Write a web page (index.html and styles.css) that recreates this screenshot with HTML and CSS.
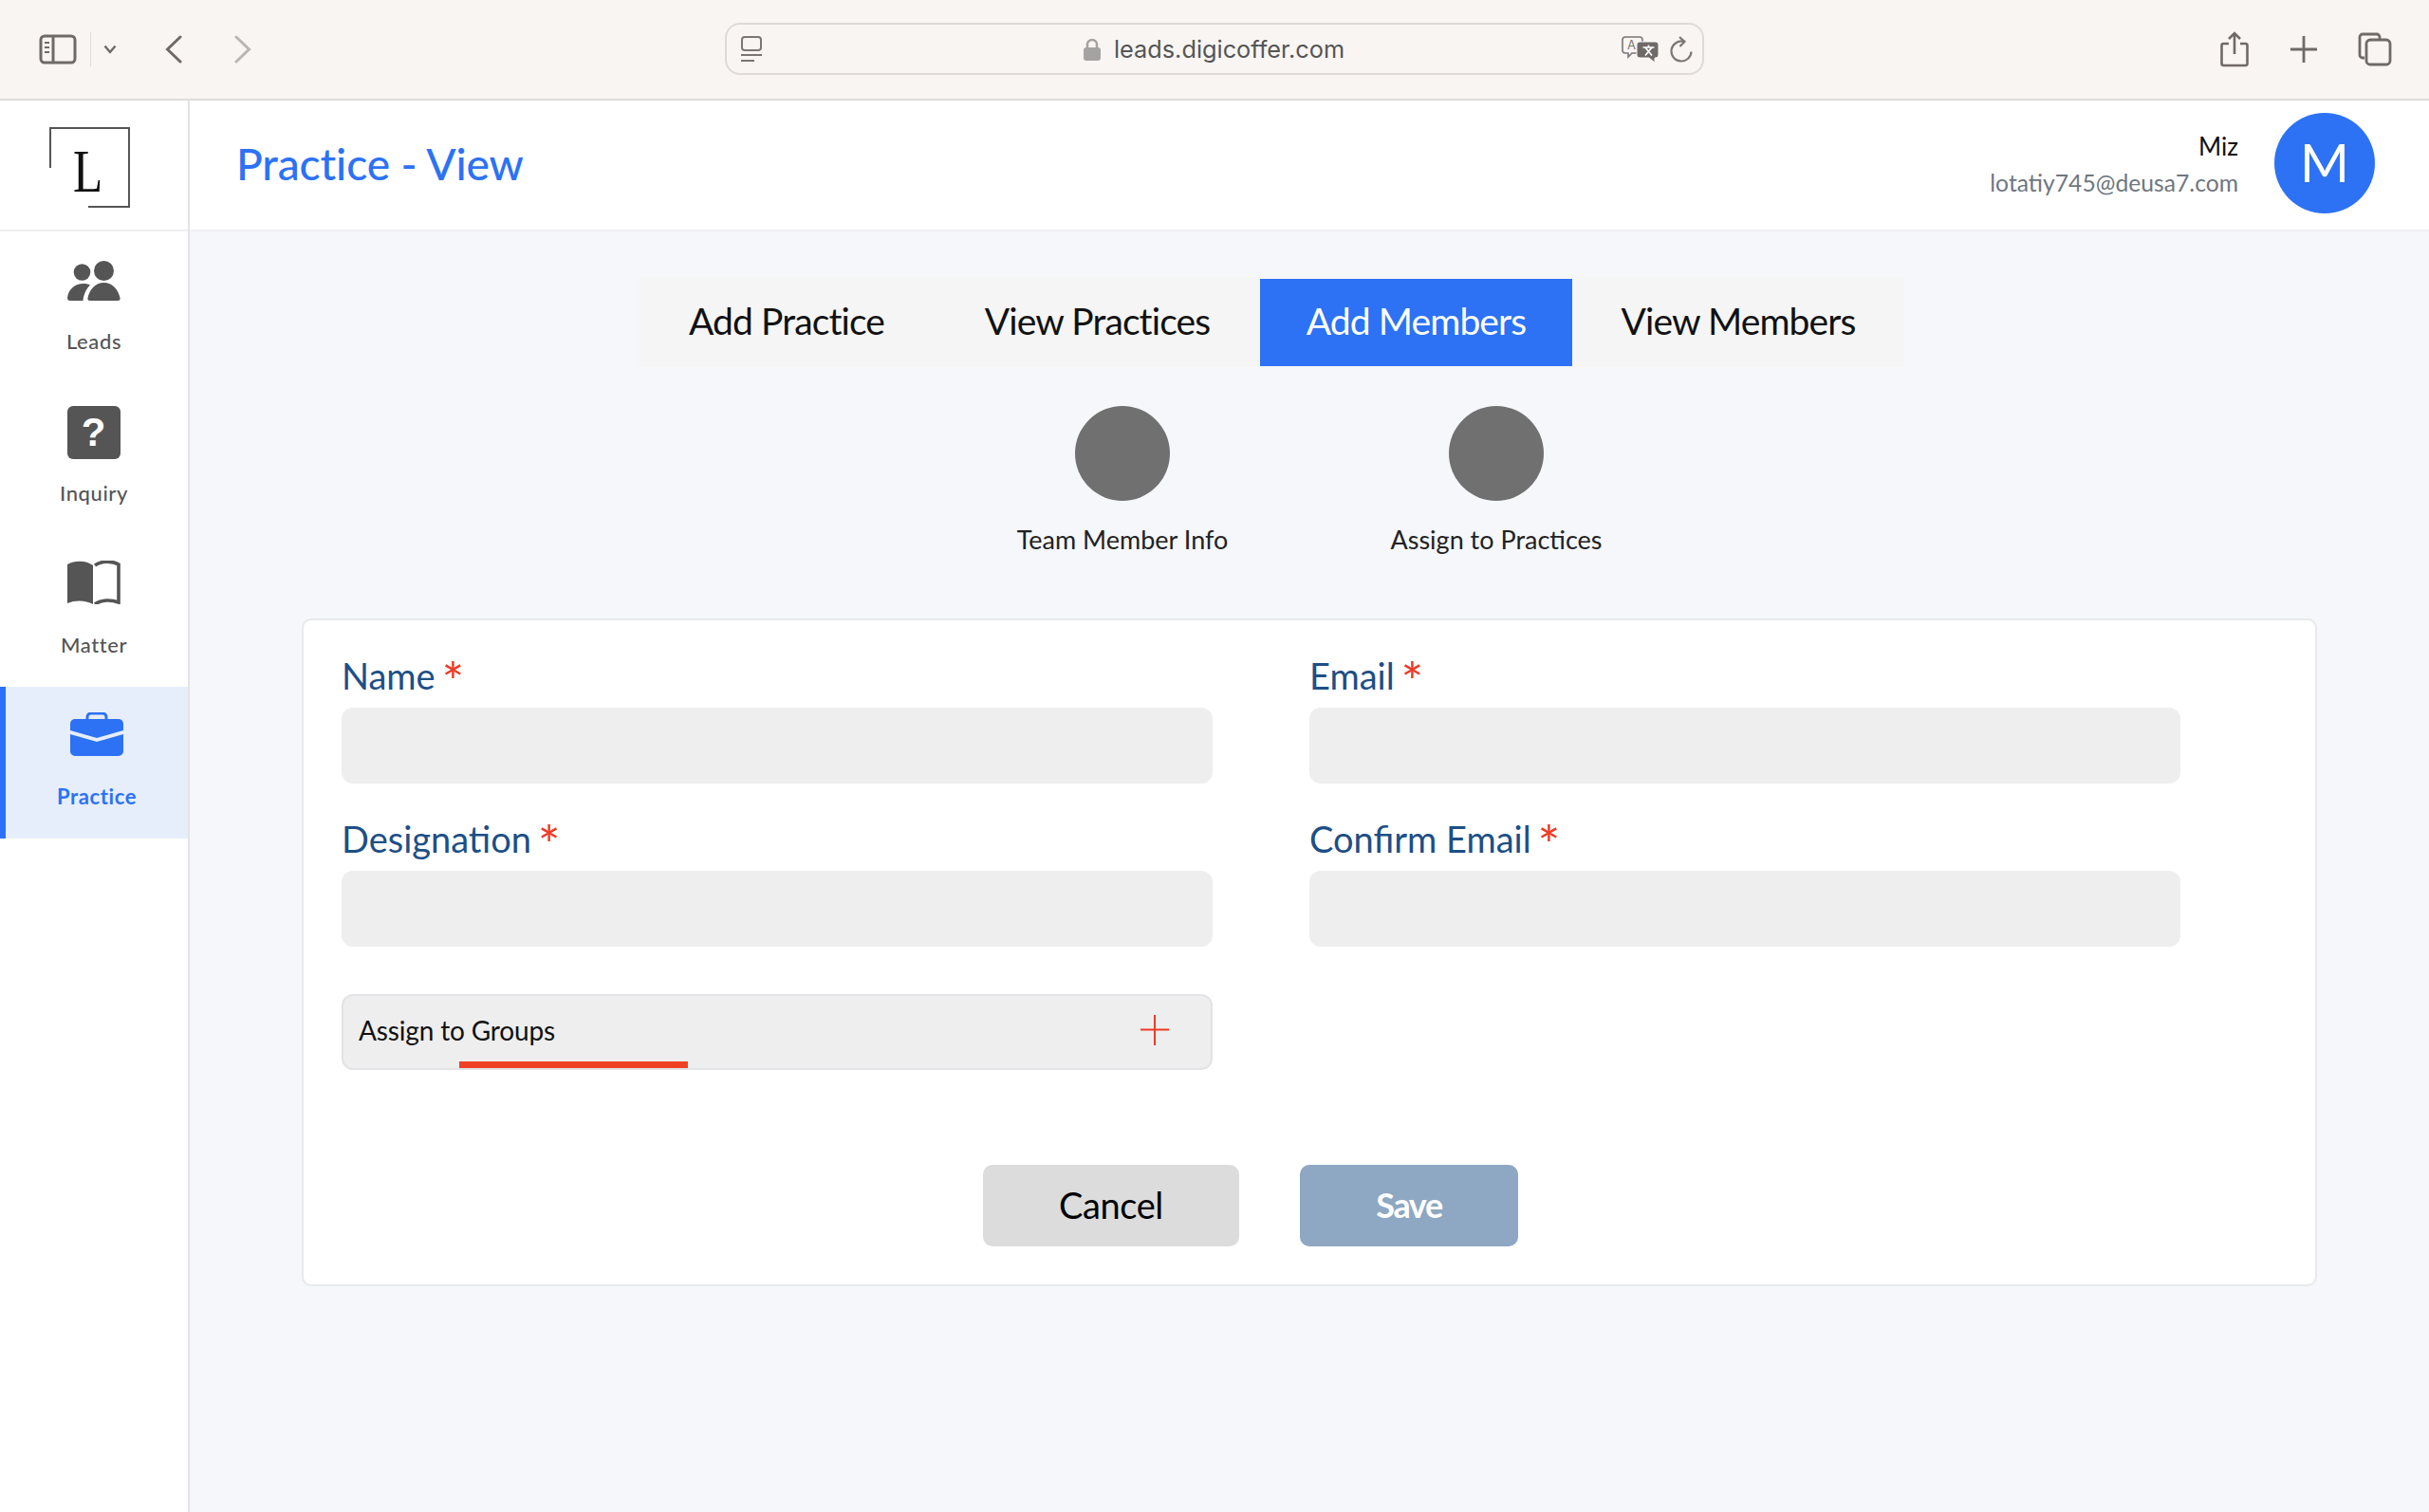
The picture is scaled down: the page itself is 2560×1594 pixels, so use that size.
FILE: index.html
```html
<!DOCTYPE html>
<html lang="en">
<head>
<meta charset="utf-8">
<title>Practice - View</title>
<link rel="stylesheet" href="styles.css">
</head>
<body>
<header class="browser">
  <div class="browser-left">
    <svg class="ic-sidebar" width="40" height="32" viewBox="0 0 40 32" fill="none" stroke="#6f6a68" stroke-width="3"><rect x="2" y="2" width="36" height="28" rx="4"/><path d="M15 2v28"/><path d="M6 9h5M6 14h5M6 19h5" stroke-width="2"/></svg>
    <span class="sep"></span>
    <svg class="ic-caret" width="14" height="10" viewBox="0 0 14 10" fill="none" stroke="#6f6a68" stroke-width="2.4"><path d="M1.500 1.500 7 8l5.500-6.500"/></svg>
    <svg class="ic-back" width="18" height="30" viewBox="0 0 18 30" fill="none" stroke="#6f6a68" stroke-width="3" stroke-linecap="round"><path d="M16 2 2.500 15 16 28"/></svg>
    <svg class="ic-forward" width="18" height="30" viewBox="0 0 18 30" fill="none" stroke="#b9b6b4" stroke-width="3" stroke-linecap="round"><path d="M2 2l13.500 13L2 28"/></svg>
  </div>
  <div class="address">
    <svg class="ic-page" width="24" height="28" viewBox="0 0 24 28" fill="none" stroke="#7b7675" stroke-width="2"><rect x="2" y="1" width="20" height="14" rx="3"/><path d="M1 20h22M1 26h14"/></svg>
    <div class="url"><svg width="18" height="24" viewBox="0 0 18 24"><path d="M4 11V7a5 5 0 0 1 10 0v4" fill="none" stroke="#a5a3a2" stroke-width="2.500"/><rect x="0" y="10" width="18" height="14" rx="3" fill="#a5a3a2"/></svg><span>leads.digicoffer.com</span></div>
    <svg class="ic-translate" width="40" height="28" viewBox="0 0 40 28"><path d="M4 1h15a3 3 0 0 1 3 3v11a3 3 0 0 1-3 3H11l-4 4v-4H4a3 3 0 0 1-3-3V4a3 3 0 0 1 3-3z" fill="#f9f5f3" stroke="#7b7675" stroke-width="1.600"/><text x="6" y="14" class="tr-a">A</text><path d="M19 6h17a3 3 0 0 1 3 3v11a3 3 0 0 1-3 3h-1v5l-6-5H19a3 3 0 0 1-3-3V9a3 3 0 0 1 3-3z" fill="#6f6a68" stroke="#f9f5f3"/><path d="M22.500 12h12M28.500 9.500V12M25 20.500l7-8.500M32 20.500l-7-8.500" stroke="#fff" stroke-width="1.700" fill="none"/></svg>
    <svg class="ic-reload" width="24" height="28" viewBox="0 0 24 28" fill="none" stroke="#7b7675" stroke-width="2.200"><path d="M14.500 5.800A10.500 10.500 0 1 0 22.500 16.500"/><path d="M10 1l5.500 4.800L10.500 11"/></svg>
  </div>
  <div class="browser-right">
    <svg width="30" height="38" viewBox="0 0 30 38" fill="none" stroke="#6f6a68" stroke-width="2.600"><path d="M9 13H3.500a2 2 0 0 0-2 2v19a2 2 0 0 0 2 2h23a2 2 0 0 0 2-2V15a2 2 0 0 0-2-2H21"/><path d="M15 24V2M9 8l6-6 6 6"/></svg>
    <svg width="28" height="28" viewBox="0 0 28 28" fill="none" stroke="#6f6a68" stroke-width="2.800"><path d="M14 0v28M0 14h28"/></svg>
    <svg width="36" height="36" viewBox="0 0 36 36" fill="none" stroke="#6f6a68" stroke-width="2.800"><path d="M7 27H5a3 3 0 0 1-3-3V5a3 3 0 0 1 3-3h15a3 3 0 0 1 3 3v2"/><rect x="9" y="8" width="25" height="26" rx="4"/></svg>
  </div>
</header>

<div class="app">
  <aside class="sidebar">
    <div class="logo">
      <div class="logo-mark"><span class="logo-letter">L</span></div>
    </div>
    <nav class="nav">
      <a class="nav-item">
        <svg width="56" height="42" viewBox="0 0 56 42" fill="#555"><circle cx="15.500" cy="12" r="8.800"/><circle cx="38.500" cy="10.500" r="10.500"/><path d="M0 39c1-9 8-15 17-15 3 0 5 .5 7 1.500-4 4-7 10-7.500 16.500H3c-2 0-3-1-3-3z"/><path d="M24 42c-2 0-3-1-2.500-3 2-9 8-16 17-16s15 7 17 16c.5 2-.5 3-2.500 3z"/></svg>
        <span>Leads</span>
      </a>
      <a class="nav-item">
        <svg width="56" height="56" viewBox="0 0 56 56"><rect width="56" height="56" rx="6" fill="#555"/><text x="28" y="42" class="q-mark">?</text></svg>
        <span>Inquiry</span>
      </a>
      <a class="nav-item">
        <svg width="56" height="46" viewBox="0 0 56 46"><path d="M0 4C9-1 20 0 27 5v41c-7-4-18-5-27-1z" fill="#555"/><path d="M29 5c7-5 18-5 25-1v40c-8-3-18-3-25 2" fill="none" stroke="#555" stroke-width="3.600"/></svg>
        <span>Matter</span>
      </a>
      <a class="nav-item active">
        <svg width="56" height="46" viewBox="0 0 56 46" fill="#2d72f5"><path d="M18 7V5a4 4 0 0 1 4-4h12a4 4 0 0 1 4 4v2" fill="none" stroke="#2d72f5" stroke-width="3"/><path d="M5 7h46a5 5 0 0 1 5 5v7L28 27 0 19v-7a5 5 0 0 1 5-5z"/><path d="M0 23l28 8 28-8v18a5 5 0 0 1-5 5H5a5 5 0 0 1-5-5z"/></svg>
        <span>Practice</span>
      </a>
    </nav>
  </aside>

  <div class="main">
    <div class="topbar">
      <h1 class="page-title">Practice - View</h1>
      <div class="user">
        <div class="user-text">
          <div class="user-name">Miz</div>
          <div class="user-email">lotatiy745@deusa7.com</div>
        </div>
        <div class="avatar">M</div>
      </div>
    </div>

    <div class="content">
      <div class="tabs">
        <a class="tab t1">Add Practice</a>
        <a class="tab t2">View Practices</a>
        <a class="tab t3 active">Add Members</a>
        <a class="tab t4">View Members</a>
      </div>

      <div class="steps">
        <div class="step"><span class="dot"></span><span class="step-label">Team Member Info</span></div>
        <div class="step"><span class="dot"></span><span class="step-label">Assign to Practices</span></div>
      </div>

      <form class="card">
        <div class="grid">
          <div class="field"><label>Name <i>*</i></label><div class="input"></div></div>
          <div class="field"><label>Email <i>*</i></label><div class="input"></div></div>
          <div class="field"><label>Designation <i>*</i></label><div class="input"></div></div>
          <div class="field"><label>Confirm Email <i>*</i></label><div class="input"></div></div>
        </div>
        <div class="assign">
          <span>Assign to Groups</span>
          <svg width="30" height="32" viewBox="0 0 30 32" fill="none" stroke="#ee3a24" stroke-width="2"><path d="M15 0v32M0 15.500h30"/></svg>
          <div class="assign-bar"></div>
        </div>
        <div class="actions">
          <button type="button" class="btn cancel">Cancel</button>
          <button type="button" class="btn save">Save</button>
        </div>
      </form>
    </div>
  </div>
</div>
</body>
</html>
```

FILE: styles.css
```css
* { box-sizing: border-box; }
html, body { margin: 0; height: 100%; }
body {
  width: 2560px;
  height: 1594px;
  overflow: hidden;
  background: #fff;
  font-family: "Lato", "Open Sans", sans-serif;
  color: #111;
  display: flex;
  flex-direction: column;
}

/* Browser chrome */
.browser {
  height: 106px;
  flex: none;
  background: #f9f5f3;
  border-bottom: 2px solid #dedbda;
  display: grid;
  grid-template-columns: 764px 1032px 1fr;
  align-items: center;
  padding: 1px 0 2px;
}
.browser-left { display: flex; align-items: center; padding-left: 41px; }
.sep { width: 1px; height: 36px; background: #e2dedc; margin: 0 13px 0 14px; }
.ic-caret { margin-right: 51px; }
.ic-forward { margin-left: 55px; }
.address {
  height: 55px;
  border: 2px solid #dfdad8;
  border-radius: 16px;
  display: flex;
  align-items: center;
  padding: 0 10px 0 14px;
}
.url {
  flex: 1;
  display: flex;
  align-items: center;
  justify-content: center;
  gap: 14px;
  font-family: "Inter", sans-serif;
  font-size: 25.300px;
  color: #555;
  padding-left: 46px;
}
.ic-translate { margin-right: 11px; }
.tr-a { font: 13px "Inter", sans-serif; fill: #7b7675; }
.browser-right { display: flex; align-items: center; justify-content: flex-end; gap: 43px; padding-right: 39px; }
.browser-right svg:first-child { margin-right: 1px; }

/* Shell */
.app { flex: 1; display: flex; min-height: 0; }
.sidebar { width: 200px; flex: none; border-right: 2px solid #e3e4e7; background: #fff; }
.logo {
  height: 138px;
  border-bottom: 2px solid #f0f0f2;
  display: flex;
  justify-content: center;
}
.logo-mark {
  position: relative;
  width: 85px;
  height: 85px;
  margin: 28px 10px 0 0;
  border-top: 2px solid #555;
  border-right: 2px solid #555;
  display: flex;
  align-items: center;
  justify-content: center;
}
.logo-mark::before { content: ""; position: absolute; left: 0; top: 0; width: 2px; height: 41px; background: #555; }
.logo-mark::after { content: ""; position: absolute; right: 0; bottom: 0; width: 42px; height: 2px; background: #555; }
.logo-letter { font: 64px/1 "Liberation Serif", serif; color: #111; margin-top: 6px; transform: scaleX(.8); }

.nav { display: flex; flex-direction: column; }
.nav-item {
  height: 160px;
  display: flex;
  flex-direction: column;
  align-items: center;
  color: #555;
  font-size: 22px;
  font-weight: 500;
  letter-spacing: .6px;
}
.nav-item svg { margin-top: 31px; flex: none; }
.nav-item:nth-child(1) span { margin-top: 29px; }
.nav-item:nth-child(2) svg { margin-top: 24px; }
.nav-item:nth-child(2) span { margin-top: 22px; }
.nav-item:nth-child(3) svg { margin-top: 27px; }
.nav-item:nth-child(3) span { margin-top: 29px; }
.nav-item.active { background: #e6eefb; border-left: 6px solid #2d72f5; color: #2d72f5; font-weight: 700; }
.nav-item.active svg { margin-top: 27px; }
.nav-item.active span { margin-top: 29px; }
.q-mark { font: 700 42px "Liberation Sans", sans-serif; fill: #fff; text-anchor: middle; }

.main { flex: 1; min-width: 0; display: flex; flex-direction: column; background: #f5f7fb; }
.topbar {
  height: 138px;
  flex: none;
  background: #fff;
  border-bottom: 2px solid #f0f0f2;
  display: flex;
  align-items: center;
  justify-content: space-between;
  padding: 0 57px 4px 49px;
}
.page-title { margin: 0; font-size: 46px; font-weight: 500; color: #2d72f5; letter-spacing: -.1px; }
.user { display: flex; align-items: center; gap: 38px; }
.user-text { text-align: right; }
.user-name { font-size: 26px; color: #111; margin-bottom: 8px; }
.user-email { font-size: 24.700px; color: #6f767e; }
.avatar {
  width: 106px;
  height: 106px;
  border-radius: 50%;
  background: #2d72f5;
  color: #fff;
  font-size: 56px;
  padding-bottom: 4px;
  display: flex;
  align-items: center;
  justify-content: center;
}

.content { flex: 1; display: flex; flex-direction: column; padding: 49px 118px 0; }
.tabs {
  align-self: flex-start;
  width: 1334px;
  height: 94px;
  margin-left: 355px;
  background: #f5f5f5;
  display: flex;
  align-items: stretch;
  padding: 1px 0;
  font-size: 39px;
  letter-spacing: -.9px;
}
.tab { display: flex; align-items: center; justify-content: center; color: #111; padding-bottom: 4px; }
.t1 { width: 312px; }
.t2 { width: 343px; }
.t3 { width: 329px; }
.t4 { flex: 1; }
.tab.active { background: #2d72f5; color: #fff; }

.steps { display: flex; justify-content: center; gap: 394px; margin-top: 41px; height: 224px; }
.step { width: 0; display: flex; flex-direction: column; align-items: center; }
.dot { width: 100px; height: 100px; border-radius: 50%; background: #707070; flex: none; }
.step-label { margin-top: 24px; font-size: 27px; color: #222; white-space: nowrap; }

.card {
  height: 704px;
  background: #fff;
  border: 2px solid #e8e9ec;
  border-radius: 10px;
  padding: 32px 40px 0;
}
.grid { display: grid; grid-template-columns: 918px 918px; column-gap: 102px; row-gap: 32px; }
.field label { display: block; height: 60px; font-size: 38px; color: #1d4f86; line-height: 52px; }
.field i { font-style: normal; color: #ee3a24; font-size: 56px; line-height: 0; vertical-align: -12px; margin-left: -3px; }
.input { height: 80px; background: #eee; border-radius: 12px; }
.assign {
  position: relative;
  width: 918px;
  height: 80px;
  margin-top: 50px;
  background: #eee;
  border: 2px solid #e1e3e6;
  border-radius: 12px;
  display: flex;
  align-items: center;
  justify-content: space-between;
  padding: 0 44px 4px 16px;
  font-size: 28px;
  letter-spacing: -.15px;
  color: #111;
}
.assign-bar { position: absolute; left: 122px; bottom: 0; width: 241px; height: 7px; background: #f04023; }
.actions { display: flex; gap: 64px; margin: 100px 0 0 676px; }
.btn { height: 86px; border: 0; border-radius: 10px; font-family: inherit; font-size: 38px; padding: 0 0 3px; }
.cancel { width: 270px; background: #dcdcdc; color: #000; letter-spacing: -.4px; }
.save { width: 230px; background: #8ea7c2; color: #fff; font-weight: 700; font-size: 36px; letter-spacing: -1.400px; }
```
